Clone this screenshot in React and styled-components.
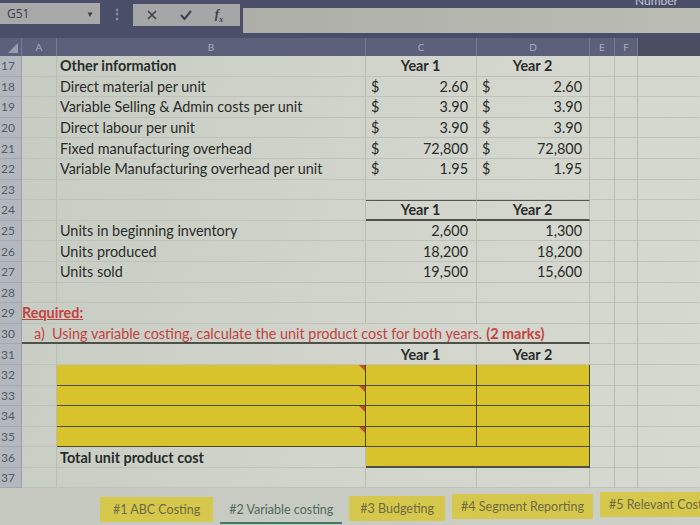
import React from 'react';
import styled, { createGlobalStyle } from 'styled-components';

const GlobalStyle = createGlobalStyle`
  html, body {
    margin: 0;
    padding: 0;
    width: 700px;
    height: 525px;
    overflow: hidden;
    background: #c9ccc3;
    font-family: Lato, "Open Sans", sans-serif;
  }
`;

const COLS = '22px 35px 309px 111px 113px 25px 23px 62px';

export const Screen = styled.div`
  width: 700px;
  height: 525px;
  display: flex;
  flex-direction: column;
  overflow: hidden;
`;

export const TopBar = styled.div`
  height: 38px;
  background: #4b4e69;
  display: flex;
  align-items: flex-start;
  padding-top: 3px;
  box-sizing: border-box;
  position: relative;
`;

export const NameBox = styled.div`
  width: 100px;
  height: 21px;
  background: #a7a8a7;
  display: flex;
  align-items: center;
  justify-content: space-between;
  padding: 0 6px 0 7px;
  box-sizing: border-box;
  font-size: 12px;
  color: #3b3d48;
  font-family: "Open Sans", sans-serif;
`;

export const Caret = styled.span`
  font-size: 8px;
  color: #3b3d48;
`;

export const Dots = styled.div`
  width: 33px;
  display: flex;
  justify-content: center;
  color: #8c8fa4;
  font-size: 14px;
  font-weight: bold;
  line-height: 21px;
`;

export const FxBox = styled.div`
  width: 107px;
  height: 22px;
  margin-top: 1px;
  background: #a5a6a6;
  display: flex;
  align-items: center;
  justify-content: space-around;
  padding: 0 6px 0 2px;
  box-sizing: border-box;
  color: #3e404c;
`;

export const Fx = styled.span`
  font-family: "Liberation Serif", serif;
  font-style: italic;
  font-weight: 700;
  font-size: 13px;
`;

export const FormulaBar = styled.div`
  flex: 1;
  height: 25px;
  margin: 5px 0 0 3px;
  background: linear-gradient(90deg, #adaea8, #bbbcb3);
`;

export const CutLabel = styled.span`
  position: absolute;
  right: 22px;
  top: -7px;
  font-size: 12px;
  color: #c6c8d6;
`;

export const HeaderRow = styled.div`
  display: grid;
  grid-template-columns: ${COLS};
  height: 18px;
  background: #5d607b;
`;

export const ColHead = styled.div`
  display: flex;
  align-items: center;
  justify-content: center;
  font-size: 10px;
  color: #a9abbd;
  background: ${({ $dark }) => ($dark ? '#4a4c60' : 'transparent')};
  border-right: 1px solid ${({ $dark }) => ($dark ? 'transparent' : '#787b93')};
`;

export const Corner = styled.div`
  display: flex;
  align-items: flex-end;
  justify-content: flex-end;
  padding: 0 3px 3px 0;
  border-right: 1px solid #787b93;
`;

export const Sheet = styled.div`
  display: flex;
  flex-direction: column;
  background: linear-gradient(100deg, #c7ccc3 0%, #d2d6cc 60%, #d6d9d0 100%);
`;

export const Row = styled.div`
  display: grid;
  grid-template-columns: ${COLS};
  height: 20.6px;
`;

export const RowNum = styled.div`
  background: #b3b8bf;
  color: #555a66;
  font-size: 12px;
  display: flex;
  align-items: center;
  padding-left: 1px;
  border-bottom: 1px solid #a3a8b0;
  border-right: 1px solid #9a9fa8;
  box-sizing: border-box;
`;

const justify = {
  center: 'center',
  right: 'flex-end',
  between: 'space-between',
};

export const Cell = styled.div`
  position: relative;
  box-sizing: border-box;
  display: flex;
  align-items: center;
  justify-content: ${({ $align }) => justify[$align] || 'flex-start'};
  padding: 0 ${({ $pr }) => $pr ?? 4}px 0 ${({ $pl }) => $pl ?? 3}px;
  grid-column: ${({ $span }) => $span || 'auto'};
  font-size: 14.4px;
  color: ${({ $red }) => ($red ? '#c4433f' : '#2a2c2a')};
  font-weight: ${({ $bold }) => ($bold ? 700 : 400)};
  white-space: nowrap;
  background: ${({ $yellow }) => ($yellow ? '#d9c32c' : 'transparent')};
  border-right: 1px solid ${({ $yellow, $noRight }) => ($yellow ? '#4d4a20' : $noRight ? 'transparent' : '#b9bdb3')};
  border-bottom: ${({ $yellow, $bottom }) =>
    $bottom ? '2px solid #4f5149' : $yellow ? '1px solid #4d4a20' : '1px solid #bec2b8'};
  border-top: ${({ $top }) => ($top ? '1.5px solid #55574f' : 'none')};
  z-index: ${({ $over }) => ($over ? 2 : 1)};
`;

export const Underlined = styled.span`
  text-decoration: underline;
  font-weight: 700;
`;

export const Marks = styled.span`
  font-weight: 700;
  margin-left: 4px;
`;

export const CommentMark = styled.span`
  position: absolute;
  top: 0;
  right: 0;
  width: 0;
  height: 0;
  border-top: 6px solid #c0502a;
  border-left: 6px solid transparent;
`;

export const TabBar = styled.div`
  flex: 1;
  display: flex;
  align-items: flex-start;
  padding: 9px 0 0 100px;
  gap: 7px;
  background: linear-gradient(100deg, #c4c8bf, #cdd0c6);
`;

export const Tab = styled.div`
  height: 25px;
  padding: 0 ${({ $pad }) => $pad || 12}px;
  display: flex;
  align-items: center;
  font-size: 12.5px;
  color: ${({ $active }) => ($active ? '#4f6a5c' : '#6d6a44')};
  background: ${({ $active }) => ($active ? 'transparent' : '#d6c84c')};
  border-bottom: ${({ $active }) => ($active ? '2px solid #3e7a68' : 'none')};
  margin-top: ${({ $shift }) => $shift || 0}px;
  white-space: nowrap;
`;

const costs = [
  ['Direct material per unit', '2.60', '2.60'],
  ['Variable Selling & Admin costs per unit', '3.90', '3.90'],
  ['Direct labour per unit', '3.90', '3.90'],
  ['Fixed manufacturing overhead', '72,800', '72,800'],
  ['Variable Manufacturing overhead per unit', '1.95', '1.95'],
];

const units = [
  ['Units in beginning inventory', '2,600', '1,300'],
  ['Units produced', '18,200', '18,200'],
  ['Units sold', '19,500', '15,600'],
];

const Tail = () => (
  <>
    <Cell />
    <Cell />
    <Cell $noRight />
  </>
);

const Blank = ({ n }) => (
  <Row>
    <RowNum>{n}</RowNum>
    <Cell />
    <Cell />
    <Cell />
    <Cell />
    <Tail />
  </Row>
);

const App = () => (
  <Screen>
    <GlobalStyle />
    <TopBar>
      <NameBox>
        G51 <Caret>▼</Caret>
      </NameBox>
      <Dots>⋮</Dots>
      <FxBox>
        <svg width="12" height="12" viewBox="0 0 12 12">
          <path d="M2 2 L10 10 M10 2 L2 10" stroke="#3e404c" strokeWidth="1.6" />
        </svg>
        <svg width="14" height="12" viewBox="0 0 14 12">
          <path d="M2 6 L5.5 10 L12 2" stroke="#3e404c" strokeWidth="2" fill="none" />
        </svg>
        <Fx>
          f<sub style={{ fontSize: 8 }}>x</sub>
        </Fx>
      </FxBox>
      <FormulaBar />
      <CutLabel>Number</CutLabel>
    </TopBar>

    <HeaderRow>
      <Corner>
        <svg width="10" height="10" viewBox="0 0 10 10">
          <path d="M10 0 L10 10 L0 10 Z" fill="#9a9cb0" />
        </svg>
      </Corner>
      <ColHead>A</ColHead>
      <ColHead>B</ColHead>
      <ColHead>C</ColHead>
      <ColHead>D</ColHead>
      <ColHead>E</ColHead>
      <ColHead>F</ColHead>
      <ColHead $dark />
    </HeaderRow>

    <Sheet>
      <Row>
        <RowNum>17</RowNum>
        <Cell />
        <Cell $bold>Other information</Cell>
        <Cell $bold $align="center">Year 1</Cell>
        <Cell $bold $align="center">Year 2</Cell>
        <Tail />
      </Row>
      {costs.map(([label, y1, y2], i) => (
        <Row key={label}>
          <RowNum>{18 + i}</RowNum>
          <Cell />
          <Cell $over>{label}</Cell>
          <Cell $align="between" $pl={5} $pr={8}>
            <span>$</span>
            {y1}
          </Cell>
          <Cell $align="between" $pl={5} $pr={7}>
            <span>$</span>
            {y2}
          </Cell>
          <Tail />
        </Row>
      ))}
      <Blank n={23} />
      <Row>
        <RowNum>24</RowNum>
        <Cell />
        <Cell />
        <Cell $bold $align="center" $top $bottom>Year 1</Cell>
        <Cell $bold $align="center" $top $bottom>Year 2</Cell>
        <Tail />
      </Row>
      {units.map(([label, y1, y2], i) => (
        <Row key={label}>
          <RowNum>{25 + i}</RowNum>
          <Cell />
          <Cell>{label}</Cell>
          <Cell $align="right" $pr={8}>{y1}</Cell>
          <Cell $align="right" $pr={7}>{y2}</Cell>
          <Tail />
        </Row>
      ))}
      <Blank n={28} />
      <Row>
        <RowNum>29</RowNum>
        <Cell $red $over $pl={0} $span="2 / 4">
          <Underlined>Required:</Underlined>
        </Cell>
        <Cell />
        <Cell />
        <Tail />
      </Row>
      <Row>
        <RowNum>30</RowNum>
        <Cell $red $over $pl={12} $span="2 / 6" $bottom>
          a)&nbsp;&nbsp;Using variable costing, calculate the unit product cost for both years.
          <Marks>(2 marks)</Marks>
        </Cell>
        <Tail />
      </Row>
      <Row>
        <RowNum>31</RowNum>
        <Cell />
        <Cell />
        <Cell $bold $align="center">Year 1</Cell>
        <Cell $bold $align="center">Year 2</Cell>
        <Tail />
      </Row>
      {[32, 33, 34, 35].map((n) => (
        <Row key={n}>
          <RowNum>{n}</RowNum>
          <Cell />
          <Cell $yellow>
            <CommentMark />
          </Cell>
          <Cell $yellow />
          <Cell $yellow />
          <Tail />
        </Row>
      ))}
      <Row>
        <RowNum>36</RowNum>
        <Cell />
        <Cell $bold>Total unit product cost</Cell>
        <Cell $yellow $bottom $span="4 / 6" />
        <Tail />
      </Row>
      <Blank n={37} />
    </Sheet>

    <TabBar>
      <Tab $pad={13}>#1 ABC Costing</Tab>
      <Tab $active $pad={9}>#2 Variable costing</Tab>
      <Tab $shift={-1} $pad={11}>#3 Budgeting</Tab>
      <Tab $shift={-3} $pad={9}>#4 Segment Reporting</Tab>
      <Tab $shift={-5} $pad={9}>#5 Relevant Costing</Tab>
    </TabBar>
  </Screen>
);

export default App;
